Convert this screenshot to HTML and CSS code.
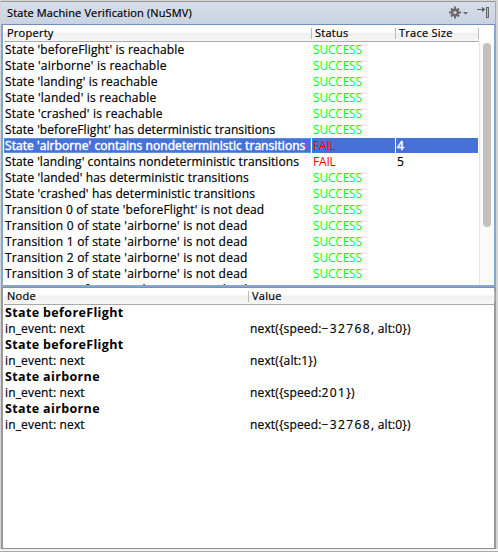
FILE: index.html
```html
<!DOCTYPE html>
<html lang="en">
<head>
<meta charset="utf-8">
<title>State Machine Verification (NuSMV)</title>
<link rel="stylesheet" href="styles.css">
</head>
<body>
<div class="window">
  <header class="titlebar">
    <h1>State Machine Verification (NuSMV)</h1>
    <svg class="gear" width="20" height="14" viewBox="0 0 20 14">
      <g stroke="#6b6b6b" stroke-width="2"><path d="M6 .5v12M0 6.5h12M2 2.5l8 8M10 2.5l-8 8"/></g>
      <circle cx="6" cy="6.5" r="4" fill="#6b6b6b"/><circle cx="6" cy="6.5" r="1.6" fill="#ced6e4"/>
      <path d="M14 6h5l-2.5 2.8z" fill="#6b6b6b"/>
    </svg>
    <svg class="hide" width="14" height="14" viewBox="0 0 14 14">
      <path d="M0 3.5h6" stroke="#666"/><path d="M5 .8l3.5 2.7-3.5 2.7z" fill="#666"/>
      <rect x="9.5" y="1.5" width="2" height="10" fill="#bbb" stroke="#666"/>
    </svg>
  </header>
  <section class="results">
    <div class="head cols"><span>Property</span><span>Status</span><span>Trace Size</span></div>
    <div class="body">
      <div class="rows">
        <div class="row cols"><span>State 'beforeFlight' is reachable</span><span class="ok">SUCCESS</span><span></span></div>
        <div class="row cols loose"><span>State 'airborne' is reachable</span><span class="ok">SUCCESS</span><span></span></div>
        <div class="row cols"><span>State 'landing' is reachable</span><span class="ok">SUCCESS</span><span></span></div>
        <div class="row cols loose"><span>State 'landed' is reachable</span><span class="ok">SUCCESS</span><span></span></div>
        <div class="row cols loose"><span>State 'crashed' is reachable</span><span class="ok">SUCCESS</span><span></span></div>
        <div class="row cols tight"><span>State 'beforeFlight' has deterministic transitions</span><span class="ok">SUCCESS</span><span></span></div>
        <div class="row cols selected"><span>State 'airborne' contains nondeterministic transitions</span><span class="fail">FAIL</span><span>4</span></div>
        <div class="row cols tight"><span>State 'landing' contains nondeterministic transitions</span><span class="fail">FAIL</span><span>5</span></div>
        <div class="row cols"><span>State 'landed' has deterministic transitions</span><span class="ok">SUCCESS</span><span></span></div>
        <div class="row cols"><span>State 'crashed' has deterministic transitions</span><span class="ok">SUCCESS</span><span></span></div>
        <div class="row cols"><span>Transition 0 of state 'beforeFlight' is not dead</span><span class="ok">SUCCESS</span><span></span></div>
        <div class="row cols loose"><span>Transition 0 of state 'airborne' is not dead</span><span class="ok">SUCCESS</span><span></span></div>
        <div class="row cols loose"><span>Transition 1 of state 'airborne' is not dead</span><span class="ok">SUCCESS</span><span></span></div>
        <div class="row cols loose"><span>Transition 2 of state 'airborne' is not dead</span><span class="ok">SUCCESS</span><span></span></div>
        <div class="row cols loose"><span>Transition 3 of state 'airborne' is not dead</span><span class="ok">SUCCESS</span><span></span></div>
        <div class="row cols loose"><span>Transition 4 of state 'airborne' is not dead</span><span class="ok">SUCCESS</span><span></span></div>
      </div>
      <div class="scroll"><div class="thumb"></div></div>
    </div>
  </section>
  <section class="trace">
    <div class="head pair"><span>Node</span><span>Value</span></div>
    <div class="row pair"><b>State beforeFlight</b></div>
    <div class="row pair"><span>in_event: next</span><span>next({speed:<i>−32768</i>, alt:0})</span></div>
    <div class="row pair"><b>State beforeFlight</b></div>
    <div class="row pair"><span>in_event: next</span><span>next({alt:1})</span></div>
    <div class="row pair"><b>State airborne</b></div>
    <div class="row pair"><span>in_event: next</span><span>next({speed:<i>201</i>})</span></div>
    <div class="row pair"><b>State airborne</b></div>
    <div class="row pair"><span>in_event: next</span><span>next({speed:<i>−32768</i>, alt:0})</span></div>
  </section>
</div>
</body>
</html>
```
FILE: styles.css
```css
* { box-sizing: border-box; }
body { margin: 0; background: #d4d4d4; color: #000; font: 12px/16px "Open Sans", "Noto Sans", sans-serif; -webkit-text-stroke: .2px; }
.window { width: 498px; height: 552px; display: flex; flex-direction: column; padding: 1px 2px 2px 1px; border-bottom: 1px solid #aaa; background: linear-gradient(#f4f4f4, #f4f4f4) bottom / 100% 2px no-repeat; }
.titlebar { height: 23px; flex: none; display: flex; align-items: center; padding: 0 4px 0 6px; background: linear-gradient(#d7deea, #cad2e1); border-top: 1px solid #999; border-right: 1px solid #aaa; }
h1 { margin: 0; flex: 1; font-size: 11px; font-weight: 400; letter-spacing: .13px; white-space: nowrap; }
.gear { margin-right: 8px; }
.results { height: 263px; flex: none; display: flex; flex-direction: column; background: #fff; border: 2px solid #83a8cf; border-top: 1px solid #6f8fb5; padding-left: 1px; }
.cols { display: grid; grid-template-columns: 308px 84px 83px; }
.pair { display: grid; grid-template-columns: 245px 246px; }
.head { height: 17px; flex: none; font-size: 11px; font-weight: 500; line-height: 16px; letter-spacing: .25px; background: linear-gradient(#fff 0 45%, #efefef 50%, #f6f6f6); border-bottom: 1px solid #aaa; }
.results .head { width: 475px; }
.head span { padding-left: 3px; background: linear-gradient(#bbb, #bbb) right 3px / 1px 11px no-repeat; }
.body { flex: 1; min-height: 0; display: flex; overflow: hidden; }
.rows { width: 475px; flex: none; }
.row { height: 16px; white-space: nowrap; letter-spacing: .15px; }
.row span, .row b { padding-left: 1px; }
.tight { letter-spacing: .08px; }
.loose { letter-spacing: .22px; }
.row .ok, .row .fail { letter-spacing: -.2px; -webkit-text-stroke: 0; }
.ok { color: #0f0; }
.fail { color: #f00; }
.selected { letter-spacing: .07px; -webkit-text-stroke: .45px; }
.selected span { height: 15px; background: #4672d8; margin-right: 1px; color: #fff; }
.selected span:first-child { box-shadow: inset 0 0 0 1px #5b94dc; }
.selected .fail { color: #f00; }
.scroll { flex: 1; background: #fafafa; border-left: 1px solid #e6e6e6; }
.thumb { width: 8px; height: 184px; margin: 1px 0 0 3px; border-radius: 4px; background: #c1c1c1; }
.trace { flex: 1; min-height: 0; background: #fff; border: 1px solid #8e8e8e; border-left: 2px solid #999; border-right: 2px solid #999; padding-left: 1px; }
.trace b { font-size: 12.5px; letter-spacing: .36px; -webkit-text-stroke: 0; }
.trace i { font-style: normal; letter-spacing: 1.4px; }
```
